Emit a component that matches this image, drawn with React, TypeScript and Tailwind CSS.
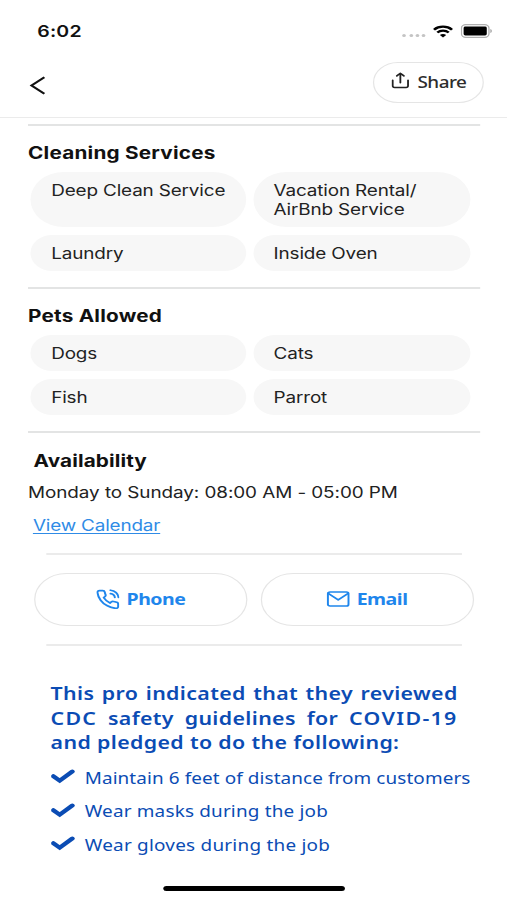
import React from 'react';
import clsx from 'clsx';

interface ChipGroupProps {
    title: string;
    items: string[];
    className?: string;
}

const cleaningServices = ['Deep Clean Service', 'Vacation Rental/\nAirBnb Service', 'Laundry', 'Inside Oven'];

const pets = ['Dogs', 'Cats', 'Fish', 'Parrot'];

const pledges = [
    { text: 'Maintain 6 feet of distance from customers', tracking: 'tracking-[0.08px]' },
    { text: 'Wear masks during the job', tracking: 'tracking-[0.15px]' },
    { text: 'Wear gloves during the job', tracking: 'tracking-[0.2px]' }
];

const StatusBar = () => (
    <div className="flex h-[62px] items-center justify-between pl-[30.5px] pr-[12px]">
        <span className="text-[16px] font-semibold tracking-[0.2px]">6:02</span>
        <div className="flex items-center">
            <div className="mt-[9px] mr-[6px] flex gap-[2.2px]">
                {[0, 1, 2, 3].map((i) => (
                    <span key={i} className="h-[3.5px] w-[3px] rounded-full bg-[#c4c4c4]" />
                ))}
            </div>
            <svg width="17" height="13" viewBox="0 0 17 13" fill="none" className="mr-[6px]">
                <path d="M1.1 4.7C5.2.7 11.8.7 15.9 4.7" stroke="#000" strokeWidth="2.3" />
                <path d="M3.8 7.6C6.4 5 10.6 5 13.2 7.6" stroke="#000" strokeWidth="2.1" />
                <path d="M8.5 12.4 5.9 9.9C7.3 8.6 9.7 8.6 11.1 9.9Z" fill="#000" />
            </svg>
            <svg width="26" height="14" viewBox="0 0 26 14" fill="none">
                <rect x="0.6" y="0.6" width="22.6" height="12.8" rx="3.6" stroke="#b0b0b0" strokeWidth="1.1" />
                <rect x="2.4" y="2.5" width="19" height="9" rx="1.4" fill="#000" />
                <path d="M24.3 5v4c.8-.3 1.3-1.1 1.3-2s-.5-1.7-1.3-2Z" fill="#a8a8a8" />
            </svg>
        </div>
    </div>
);

const Header = () => (
    <div className="flex h-[56px] items-start justify-between border-b border-[#ebebeb] pl-[24px] pr-[19px]">
        <button className="pt-[14px]" aria-label="Back">
            <svg width="14" height="19" viewBox="0 0 14 19" fill="none" stroke="#111" strokeWidth="2">
                <path d="M12.4 1.3 1.9 9.5 12.4 17.7" />
            </svg>
        </button>
        <button className="flex h-[41px] w-[91px] items-center rounded-full border-[1.5px] border-[#e5e5e5] pl-[14px]">
            <svg
                width="15"
                height="17"
                viewBox="0 0 15 17"
                fill="none"
                stroke="#222"
                strokeWidth="1.5"
                strokeLinecap="round"
                strokeLinejoin="round"
                className="-mt-[5px]"
            >
                <path d="M1.2 8.2v5.6c0 1 .6 1.7 1.6 1.7h9.4c1 0 1.6-.7 1.6-1.7V8.2" />
                <path d="M7.5 10.8V1.3M4.6 3.9 7.5 1.2l2.9 2.7" />
            </svg>
            <span className="ml-[6.5px] font-['Noto_Sans',sans-serif] text-[15.5px] font-medium tracking-[-0.4px] text-[#2d2d2d]">
                Share
            </span>
        </button>
    </div>
);

const ChipGroup: React.FC<ChipGroupProps> = ({ title, items, className }) => (
    <section className={clsx('mr-[22px] ml-[23px] border-b-2 border-[#e3e4e4]', className)}>
        <h2 className="text-[17px] leading-[20px] font-bold tracking-[0.18px]">{title}</h2>
        <div className="mt-[9px] ml-[2px] grid grid-cols-[177px_178px] gap-x-[5.5px] gap-y-[8px]">
            {items.map((item) => (
                <div
                    key={item}
                    className="rounded-[28px] bg-[#f7f7f7] pt-[9px] pr-2 pb-[8px] pl-[17px] text-[15.5px] leading-[19px] tracking-[-0.12px] whitespace-pre-line text-[#222]"
                >
                    {item}
                </div>
            ))}
        </div>
    </section>
);

const contactClass =
    "flex h-[53px] flex-1 items-center justify-center gap-[6px] rounded-full border-[1.5px] border-[#e5e5e5] font-['Noto_Sans',sans-serif] text-[16px] font-bold tracking-[-0.4px] text-[#1f86ec]";

const Contact = () => (
    <div className="mt-[18px] mr-[27.5px] ml-[28px] flex gap-[10.5px]">
        <button className={contactClass}>
            <svg
                width="19"
                height="20"
                viewBox="0 0 24 24"
                preserveAspectRatio="none"
                fill="none"
                stroke="currentColor"
                strokeWidth="2.1"
                strokeLinecap="round"
                strokeLinejoin="round"
                className="-mt-[2px]"
            >
                <path d="M14.7 1.500A9.500 8.800 0 0 1 23 10M14.700 5.500A5.200 4.900 0 0 1 19.200 10" />
                <path d="M22.700 18v3a2.200 2.200 0 0 1-2.400 2.200 21.500 21.500 0 0 1-9.300-3.300 21 21 0 0 1-6.500-6.500A21.500 21.500 0 0 1 1.200 4.300 2.200 2.200 0 0 1 3.400 1.900h3.200a2.200 2.200 0 0 1 2.200 1.900c.1 1 .4 2 .8 2.900a2.200 2.200 0 0 1-.5 2.300L7.700 10.400a17 17 0 0 0 6.500 6.500l1.400-1.400a2.200 2.200 0 0 1 2.300-.5c.9.400 1.900.6 2.900.8a2.200 2.200 0 0 1 1.900 2.200Z" />
            </svg>
            <span className="-mt-px">Phone</span>
        </button>
        <button className={contactClass}>
            <svg
                width="19"
                height="16"
                viewBox="0 0 19 16"
                fill="none"
                stroke="currentColor"
                strokeWidth="1.7"
                strokeLinecap="round"
                strokeLinejoin="round"
                className="-mt-px"
            >
                <rect x="1" y="1" width="17" height="14" rx="1.8" />
                <path d="M1.3 2.3 9.5 8.8l8.2-6.5" />
            </svg>
            <span className="-mt-px">Email</span>
        </button>
    </div>
);

const CheckMark = () => (
    <svg width="20" height="16" viewBox="0 0 20 16" fill="none" stroke="#0b4cb4" strokeWidth="4" className="-mt-[4px] shrink-0">
        <path d="M1.8 8.2 7 12.7 17.3 3.5" strokeLinecap="round" />
    </svg>
);

const Pledge = () => (
    <section className="mt-[35px] ml-[41.5px] w-[334px] font-['Noto_Sans',sans-serif] text-[#0b4cb4]">
        <h2 className="text-justify text-[17.5px] leading-[24.5px] font-semibold tracking-[0.3px]">
            This pro indicated that they reviewed <span className="tracking-[1px]">CDC</span> safety guidelines for{' '}
            <span className="tracking-[1.1px]">COVID-19</span> and pledged to do the following:
        </h2>
        <ul className="mt-[7px]">
            {pledges.map((p) => (
                <li key={p.text} className="flex h-[33.6px] items-center">
                    <CheckMark />
                    <span className={clsx('ml-[8px] text-[15.5px] whitespace-nowrap', p.tracking)}>{p.text}</span>
                </li>
            ))}
        </ul>
    </section>
);

export default function App() {
    return (
        <div className="h-[900px] w-[507px] overflow-hidden bg-white">
            {/* 416pt wide layout stretched to the full width of the frame */}
            <div className="flex h-[900px] w-[416px] origin-top-left scale-x-[1.21875] flex-col bg-white font-['Inter',sans-serif] text-[#111]">
                <StatusBar />
                <Header />
                <div className="mt-[6px] mr-[22px] ml-[23px] h-[2px] shrink-0 bg-[#e3e4e4]" />

                <ChipGroup title="Cleaning Services" items={cleaningServices} className="pt-[17px] pb-[16px]" />
                <ChipGroup title="Pets Allowed" items={pets} className="pt-[17px] pb-[16px]" />

                {/* Availability */}
                <section className="pt-[18px] pl-[23px]">
                    <h2 className="ml-[4.5px] text-[17px] leading-[20px] font-bold tracking-[0.1px]">Availability</h2>
                    <p className="mt-[12px] text-[15.5px] leading-[20px] tracking-[-0.06px] text-[#222]">
                        Monday to Sunday: 08:00 AM - 05:00 PM
                    </p>
                    <a className="mt-[13px] ml-[4px] block w-fit text-[15.5px] leading-[20px] tracking-[-0.14px] text-[#2f8be6] underline underline-offset-2">
                        View Calendar
                    </a>
                </section>

                <div className="mt-[17px] mr-[37px] ml-[37.5px] h-[2px] shrink-0 bg-[#ebebeb]" />
                <Contact />
                <div className="mt-[18px] mr-[37px] ml-[37.5px] h-[2px] shrink-0 bg-[#ebebeb]" />

                <Pledge />

                <div className="mx-auto mt-auto mb-[9px] h-[5.5px] w-[149px] shrink-0 rounded-full bg-black" />
            </div>
        </div>
    );
}
